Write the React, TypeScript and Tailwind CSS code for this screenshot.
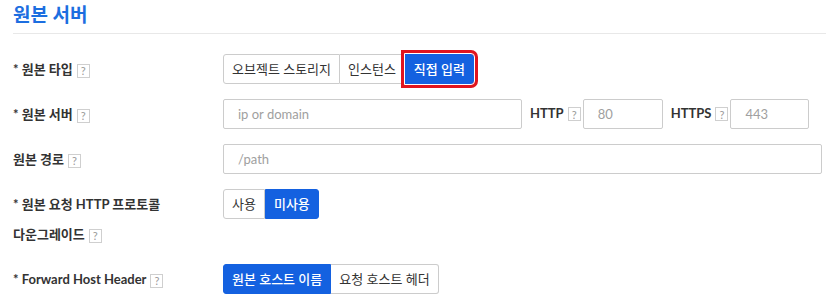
import React from "react";

const Help: React.FC = () => (
  <span className="ml-[4px] inline-flex h-[14px] w-[13px] items-center justify-center border border-[#cfcfcf] bg-white align-middle text-[11px] font-normal leading-none text-[#9a9a9a]">
    ?
  </span>
);

interface SegProps {
  items: string[];
  active: number;
  highlight?: boolean;
}

const Segmented: React.FC<SegProps> = ({ items, active, highlight }) => (
  <div className="flex h-[30px]">
    {items.map((label, i) => {
      const first = i === 0;
      const last = i === items.length - 1;
      const on = i === active;
      return (
        <button
          key={label}
          className={[
            "h-[30px] px-[8px] text-[13px] leading-none",
            first ? "rounded-l-[3px]" : "",
            last ? "rounded-r-[3px]" : "",
            on
              ? "bg-[#1461e0] font-medium text-white border border-[#1461e0]"
              : "bg-white text-[#333] border border-[#cccccc]",
            !first && !on ? "border-l-0" : "",
            on && highlight
              ? "outline outline-1 outline-white shadow-[0_0_0_4px_#e0141e]"
              : "",
          ].join(" ")}
        >
          {label}
        </button>
      );
    })}
  </div>
);

const Input: React.FC<{ placeholder: string; className: string }> = ({
  placeholder,
  className,
}) => (
  <input
    placeholder={placeholder}
    className={`h-[30px] rounded-[2px] border border-[#cccccc] bg-white px-[14px] text-[13px] text-[#333] outline-none placeholder:text-[#a0a0a0] ${className}`}
  />
);

const Row: React.FC<{ label: React.ReactNode; children?: React.ReactNode }> = ({
  label,
  children,
}) => (
  <div className="mb-[15px] flex">
    <div className="w-[210px] shrink-0 text-[13px] font-bold leading-[30px] text-[#333]">
      {label}
    </div>
    <div className="flex flex-1 items-start">{children}</div>
  </div>
);

export default function App() {
  return (
    <div className="h-[303px] w-[826px] bg-white font-[Lato,'Noto_Sans_CJK_KR',sans-serif]">
      <div className="pl-[13px]">
        <h1 className="pt-[1px] text-[19px] font-bold leading-[28px] text-[#1c6ee0]">
          원본 서버
        </h1>
        <div className="mt-[4px] h-px bg-[#e8e8e8]" />
      </div>

      <div className="pl-[13px] pr-[4px] pt-[20px]">
        <Row
          label={
            <>
              * 원본 타입
              <Help />
            </>
          }
        >
          <Segmented
            items={["오브젝트 스토리지", "인스턴스", "직접 입력"]}
            active={2}
            highlight
          />
        </Row>

        <Row
          label={
            <>
              * 원본 서버
              <Help />
            </>
          }
        >
          <div className="flex items-center">
            <Input placeholder="ip or domain" className="w-[299px]" />
            <span className="ml-[8px] text-[13px] font-bold text-[#333]">HTTP</span>
            <Help />
            <Input placeholder="80" className="ml-[2px] w-[80px]" />
            <span className="ml-[8px] text-[13px] font-bold text-[#333]">HTTPS</span>
            <Help />
            <Input placeholder="443" className="ml-[2px] w-[79px]" />
          </div>
        </Row>

        <Row
          label={
            <>
              원본 경로
              <Help />
            </>
          }
        >
          <Input placeholder="/path" className="w-full" />
        </Row>

        <Row
          label={
            <>
              * 원본 요청 HTTP 프로토콜
              <br />
              다운그레이드
              <Help />
            </>
          }
        >
          <Segmented items={["사용", "미사용"]} active={1} />
        </Row>

        <Row
          label={
            <>
              * Forward Host Header
              <Help />
            </>
          }
        >
          <Segmented items={["원본 호스트 이름", "요청 호스트 헤더"]} active={0} />
        </Row>
      </div>
    </div>
  );
}
